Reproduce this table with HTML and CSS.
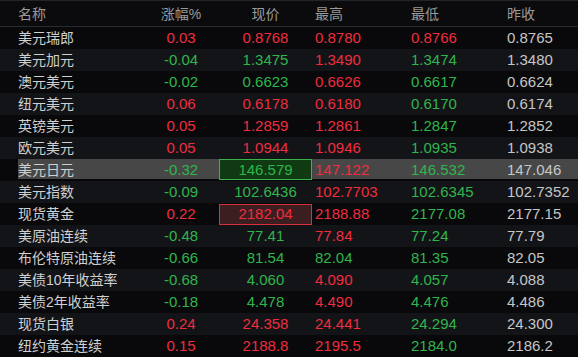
FILE: index.html
```html
<!DOCTYPE html>
<html lang="zh">
<head>
<meta charset="utf-8">
<title>外汇行情</title>
<link rel="stylesheet" href="styles.css">
</head>
<body>
<div class="board">
  <div class="row head">
    <div class="c name">名称</div>
    <div class="c chg">涨幅%</div>
    <div class="c px">现价</div>
    <div class="c hi">最高</div>
    <div class="c lo">最低</div>
    <div class="c prev">昨收</div>
  </div>
  <div class="row">
    <div class="c name">美元瑞郎</div><div class="c chg up">0.03</div><div class="c px up">0.8768</div><div class="c hi up">0.8780</div><div class="c lo up">0.8766</div><div class="c prev">0.8765</div>
  </div>
  <div class="row">
    <div class="c name">美元加元</div><div class="c chg dn">-0.04</div><div class="c px dn">1.3475</div><div class="c hi up">1.3490</div><div class="c lo dn">1.3474</div><div class="c prev">1.3480</div>
  </div>
  <div class="row">
    <div class="c name">澳元美元</div><div class="c chg dn">-0.02</div><div class="c px dn">0.6623</div><div class="c hi up">0.6626</div><div class="c lo dn">0.6617</div><div class="c prev">0.6624</div>
  </div>
  <div class="row">
    <div class="c name">纽元美元</div><div class="c chg up">0.06</div><div class="c px up">0.6178</div><div class="c hi up">0.6180</div><div class="c lo dn">0.6170</div><div class="c prev">0.6174</div>
  </div>
  <div class="row">
    <div class="c name">英镑美元</div><div class="c chg up">0.05</div><div class="c px up">1.2859</div><div class="c hi up">1.2861</div><div class="c lo dn">1.2847</div><div class="c prev">1.2852</div>
  </div>
  <div class="row">
    <div class="c name">欧元美元</div><div class="c chg up">0.05</div><div class="c px up">1.0944</div><div class="c hi up">1.0946</div><div class="c lo dn">1.0935</div><div class="c prev">1.0938</div>
  </div>
  <div class="row sel">
    <div class="c name">美元日元</div><div class="c chg dn">-0.32</div><div class="c px"><span class="box box-dn">146.579</span></div><div class="c hi up">147.122</div><div class="c lo dn">146.532</div><div class="c prev">147.046</div>
  </div>
  <div class="row">
    <div class="c name">美元指数</div><div class="c chg dn">-0.09</div><div class="c px dn">102.6436</div><div class="c hi up">102.7703</div><div class="c lo dn">102.6345</div><div class="c prev">102.7352</div>
  </div>
  <div class="row">
    <div class="c name">现货黄金</div><div class="c chg up">0.22</div><div class="c px"><span class="box box-up">2182.04</span></div><div class="c hi up">2188.88</div><div class="c lo dn">2177.08</div><div class="c prev">2177.15</div>
  </div>
  <div class="row">
    <div class="c name">美原油连续</div><div class="c chg dn">-0.48</div><div class="c px dn">77.41</div><div class="c hi up">77.84</div><div class="c lo dn">77.24</div><div class="c prev">77.79</div>
  </div>
  <div class="row">
    <div class="c name">布伦特原油连续</div><div class="c chg dn">-0.66</div><div class="c px dn">81.54</div><div class="c hi dn">82.04</div><div class="c lo dn">81.35</div><div class="c prev">82.05</div>
  </div>
  <div class="row">
    <div class="c name">美债10年收益率</div><div class="c chg dn">-0.68</div><div class="c px dn">4.060</div><div class="c hi up">4.090</div><div class="c lo dn">4.057</div><div class="c prev">4.088</div>
  </div>
  <div class="row">
    <div class="c name">美债2年收益率</div><div class="c chg dn">-0.18</div><div class="c px dn">4.478</div><div class="c hi up">4.490</div><div class="c lo dn">4.476</div><div class="c prev">4.486</div>
  </div>
  <div class="row">
    <div class="c name">现货白银</div><div class="c chg up">0.24</div><div class="c px up">24.358</div><div class="c hi up">24.441</div><div class="c lo dn">24.294</div><div class="c prev">24.300</div>
  </div>
  <div class="row">
    <div class="c name">纽约黄金连续</div><div class="c chg up">0.15</div><div class="c px up">2188.8</div><div class="c hi up">2195.5</div><div class="c lo dn">2184.0</div><div class="c prev">2186.2</div>
  </div>
</div>
</body>
</html>
```

FILE: styles.css
```css
html, body {
  margin: 0;
  padding: 0;
  background: #08080a;
}
body {
  width: 578px;
  height: 357px;
  overflow: hidden;
  font-family: "Liberation Sans", "Noto Sans CJK SC", sans-serif;
}
.board {
  display: flex;
  flex-direction: column;
  border-top: 1px solid #222326;
}
.row {
  display: grid;
  grid-template-columns: 132px 69px 93px 96px 96px 1fr;
  padding-left: 18px;
  height: 22px;
  align-items: center;
  font-size: 15px;
  color: #c6c6c6;
  background: #09090b;
}
.row:nth-child(odd) {
  background: #131418;
}
.row.head {
  height: 25px;
  border-bottom: 1px solid #2a2b2e;
  background: #0b0b0d;
  color: #9a9a9a;
  font-size: 14px;
}
.row.sel {
  background: #474747;
  background-clip: content-box;
  padding-bottom: 2px;
  height: 20px;
}
.c {
  white-space: nowrap;
  line-height: 20px;
}
.name {
  font-size: 14px;
  color: #d0d0d0;
}
.head .name { color: #9a9a9a; }
.chg {
  text-align: center;
  padding-right: 7px;
}
.px {
  text-align: center;
  display: flex;
  justify-content: center;
  align-items: stretch;
  height: 100%;
  align-items: center;
}
.hi, .lo, .prev {
  padding-left: 3px;
}
.up { color: #f02c3e; }
.dn { color: #30b54c; }
.box {
  display: flex;
  align-items: center;
  justify-content: center;
  box-sizing: border-box;
  width: 93px;
  height: 21px;
  border: 1px solid;
}
.box-dn {
  background: #0f3a12;
  border-color: #3cb24c;
  color: #30b54c;
}
.box-up {
  background: #3c1e20;
  border-color: #d63040;
  color: #f02c3e;
}
```
